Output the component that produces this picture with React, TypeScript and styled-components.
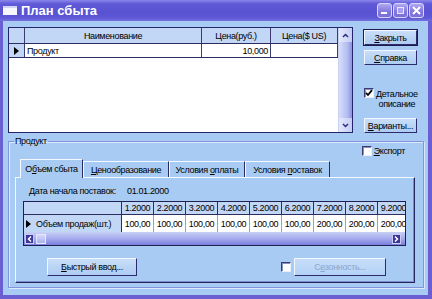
import React from "react";
import styled, { createGlobalStyle } from "styled-components";

const GlobalStyle = createGlobalStyle`
  html, body { margin: 0; padding: 0; }
  body {
    width: 432px; height: 299px; overflow: hidden;
    font-family: "Liberation Sans", Arial, sans-serif;
    font-size: 9px;
    letter-spacing: -0.35px;
    color: #000;
    background: #6a5ed2;
  }
  * { box-sizing: border-box; }
`;

const Window = styled.div`
  width: 432px;
  height: 299px;
  display: flex;
  flex-direction: column;
  background: #6a5ed2;
`;

const TitleBar = styled.div`
  flex: none;
  height: 21px;
  display: flex;
  align-items: center;
  padding: 0 8px 0 3px;
  background: linear-gradient(to bottom, #8c86ec 0%, #605ad8 18%, #5852d2 60%, #5e58d6 85%, #7570e0 100%);
`;

const TitleText = styled.span`
  margin-left: 4px;
  font-family: "Liberation Sans", Arial, sans-serif;
  font-weight: bold;
  font-size: 13px;
  letter-spacing: 0;
  color: #fff;
`;

const TitleButtons = styled.div`
  margin-left: auto;
  display: flex;
  gap: 1px;
  align-items: center;
`;

const TitleBtn = styled.div`
  width: 15px;
  height: 15px;
  border-radius: 3px;
  border: 1px solid #d8d4ff;
  background: linear-gradient(to bottom, #b0a8f0, #8076dc 60%, #7a70d8);
  display: flex;
  align-items: center;
  justify-content: center;
`;

const Frame = styled.div`
  flex: 1;
  display: flex;
  padding: 0 4px 4px 3px;
`;

const Body = styled.div`
  flex: 1;
  background: #a7cbf3;
  display: flex;
  flex-direction: column;
  padding: 6px 4px 7px 5px;
`;

const TopArea = styled.div`
  display: flex;
  gap: 11px;
  height: 106px;
  flex: none;
`;

const GridFrame = styled.div`
  width: 345px;
  height: 106px;
  border: 1px solid #24246a;
  background: #fff;
  display: flex;
`;

const GridMain = styled.div`
  flex: 1;
  display: flex;
  flex-direction: column;
`;

const TopHeader = styled.div`
  display: flex;
  height: 16px;
  background: #c2d6f6;
  border-bottom: 1px solid #2c2c60;
`;

const TopRow = styled.div`
  display: flex;
  height: 14px;
  border-bottom: 1px solid #2c2c60;
`;

const Cell = styled.div<{ $w: number; $align?: string; $head?: boolean }>`
  width: ${(p) => p.$w}px;
  flex: none;
  height: 100%;
  display: flex;
  align-items: center;
  justify-content: ${(p) => p.$align || "flex-start"};
  padding: 0 2px;
  border-right: 1px solid #3c3c70;
  background: ${(p) => (p.$head ? "#c2d6f6" : "#fff")};
  white-space: nowrap;
  overflow: hidden;
`;

const VScroll = styled.div`
  width: 14px;
  display: flex;
  flex-direction: column;
  justify-content: space-between;
  background: linear-gradient(to right, #d8def9, #b2bcf0 65%, #8e92e0);
  border-left: 1px solid #c8d0f4;
`;

const ScrollArrow = styled.div`
  height: 14px;
  display: flex;
  align-items: center;
  justify-content: center;
  background: linear-gradient(to right, #e4e8fc, #c4ccf4);
`;

const SideColumn = styled.div`
  width: 53px;
  display: flex;
  flex-direction: column;
  padding-top: 3px;
`;

const Btn = styled.button<{ $w?: number; $h?: number; $default?: boolean; $mt?: number }>`
  width: ${(p) => (p.$w ? `${p.$w}px` : "100%")};
  height: ${(p) => p.$h || 15}px;
  margin-top: ${(p) => p.$mt || 0}px;
  padding: 0;
  font: inherit;
  letter-spacing: inherit;
  color: #000;
  background: linear-gradient(to bottom, #c8def9, #aecbf2);
  border: 1px solid;
  border-color: #f2f7ff #2c2c6c #2c2c6c #f2f7ff;
  box-shadow: ${(p) => (p.$default ? "0 0 0 1px #1c1c4e" : "none")};
  display: flex;
  align-items: center;
  justify-content: center;
  &:disabled {
    color: #8ea4cc;
    background: linear-gradient(to bottom, #c6ddfa, #b4d2f6);
  }
`;

const Acc = styled.span`
  text-decoration: underline;
`;

const CheckRow = styled.div<{ $mt?: number }>`
  display: flex;
  align-items: flex-start;
  gap: 2px;
  margin-top: ${(p) => p.$mt || 0}px;
`;

const CheckBox = styled.span`
  flex: none;
  width: 10px;
  height: 10px;
  background: #fff;
  border: 1px solid;
  border-color: #3c3c70 #e8f0ff #e8f0ff #3c3c70;
  box-shadow: inset 1px 1px 0 #8890c0;
  display: flex;
  align-items: center;
  justify-content: center;
`;

const CheckLabel = styled.span`
  text-align: center;
  line-height: 10px;
  padding-top: 1px;
`;

const Group = styled.fieldset`
  flex: 1;
  margin: 3px 0 0 0;
  padding: 0 8px 4px 6px;
  border: 1px solid #8494dc;
  box-shadow: inset 1px 1px 0 #dce8ff, 1px 1px 0 #dce8ff;
  display: flex;
  flex-direction: column;
  min-width: 0;
`;

const Legend = styled.legend`
  padding: 0 1px;
  margin-left: -1px;
  line-height: 10px;
`;

const ExportRow = styled.div`
  display: flex;
  justify-content: flex-end;
  align-items: center;
  gap: 2px;
  height: 13px;
  margin-top: -2px;
  padding-right: 10px;
`;

const TabStrip = styled.div`
  display: flex;
  align-items: flex-end;
  height: 18px;
  margin-top: 2px;
  padding-left: 5px;
`;

const Tab = styled.div<{ $w: number; $active?: boolean }>`
  width: ${(p) => p.$w}px;
  height: ${(p) => (p.$active ? 19 : 16)}px;
  margin-bottom: ${(p) => (p.$active ? -1 : 0)}px;
  position: relative;
  z-index: ${(p) => (p.$active ? 1 : 0)};
  display: flex;
  align-items: center;
  justify-content: center;
  background: #a7cbf3;
  border-top: 1px solid #f4f8ff;
  border-left: 1px solid #f4f8ff;
  border-right: 1px solid #2a2a60;
  white-space: nowrap;
`;

const TabPanel = styled.div`
  flex: 1;
  border: 1px solid;
  border-color: #f4f8ff #26265e #26265e #f4f8ff;
  box-shadow: inset -1px -1px 0 #7c8ccc;
  padding: 7px 7px 0 7px;
  display: flex;
  flex-direction: column;
`;

const DateRow = styled.div`
  display: grid;
  grid-template-columns: 98px auto;
  margin-left: 6px;
  height: 12px;
  line-height: 12px;
  white-space: nowrap;
`;

const DataGrid = styled.div`
  margin-top: 4px;
  width: 383px;
  border: 1px solid #202052;
  background: #a7cbf3;
  display: flex;
  flex-direction: column;
  overflow: hidden;
`;

const DataHeader = styled.div`
  display: flex;
  height: 13px;
  background: #c2d6f6;
  border-bottom: 1px solid #2c2c60;
`;

const DataRow = styled.div`
  display: flex;
  height: 17px;
  background: #fff;
`;

const DCell = styled.div<{ $w: number; $head?: boolean }>`
  width: ${(p) => p.$w}px;
  flex: none;
  height: 100%;
  display: flex;
  align-items: center;
  justify-content: center;
  border-right: 1px solid ${(p) => (p.$head ? "#2c2c60" : "#9aa0c0")};
  background: ${(p) => (p.$head ? "#c2d6f6" : "#fff")};
  white-space: nowrap;
`;

const RowHead = styled.div`
  width: 98px;
  flex: none;
  height: 100%;
  display: flex;
  align-items: center;
  gap: 5px;
  padding-left: 2px;
  background: #c2d6f6;
  border-right: 1px solid #2c2c60;
  white-space: nowrap;
`;

const HScroll = styled.div`
  height: 13px;
  display: flex;
  align-items: center;
  gap: 2px;
  padding: 0 4px 0 1px;
  background: linear-gradient(to bottom, #c8d0f6, #9ea4ea 60%, #7a7cdc);
`;

const HArrow = styled.div`
  width: 9px;
  height: 10px;
  background: #3c3698;
  border: 1px solid #c8ccf4;
  display: flex;
  align-items: center;
  justify-content: center;
`;

const HThumb = styled.div`
  width: 10px;
  height: 10px;
  background: linear-gradient(to bottom, #d6d8fa, #aab0ee);
  border: 1px solid #e6e8ff;
`;

const HSpacer = styled.div`
  flex: 1;
`;

const BottomRow = styled.div`
  display: flex;
  align-items: center;
  margin-top: 12px;
  height: 18px;
  padding: 0 21px 0 24px;
`;

const BottomRight = styled.div`
  margin-left: auto;
  display: flex;
  align-items: center;
  gap: 3px;
`;

const Check = () => (
  <svg width="8" height="8" viewBox="0 0 8 8">
    <polyline points="1,3.8 3,6 7,1.2" fill="none" stroke="#000" strokeWidth="1.8" />
  </svg>
);

const RowMarker = () => (
  <svg width="5" height="8" viewBox="0 0 5 8">
    <polygon points="0,0 5,4 0,8" fill="#000" />
  </svg>
);

const months = ["1.2000", "2.2000", "3.2000", "4.2000", "5.2000", "6.2000", "7.2000", "8.2000", "9.2000"];
const values = ["100,00", "100,00", "100,00", "100,00", "100,00", "100,00", "200,00", "200,00", "200,00"];

export default function App() {
  return (
    <>
      <GlobalStyle />
      <Window>
        <TitleBar>
          <svg width="14" height="9" viewBox="0 0 14 9">
            <rect x="0" y="0" width="14" height="9" fill="#f6f6ff" />
            <rect x="0" y="0" width="14" height="2" fill="#d4d4f8" />
          </svg>
          <TitleText>План сбыта</TitleText>
          <TitleButtons>
            <TitleBtn>
              <svg width="11" height="11" viewBox="0 0 11 11">
                <rect x="2" y="7" width="6" height="2" fill="#fff" />
              </svg>
            </TitleBtn>
            <TitleBtn>
              <svg width="11" height="11" viewBox="0 0 11 11">
                <rect x="2.5" y="2.5" width="6" height="6" fill="#a89ff0" stroke="#e8e6ff" strokeWidth="1" />
              </svg>
            </TitleBtn>
            <TitleBtn>
              <svg width="11" height="11" viewBox="0 0 11 11">
                <path d="M2,2 L9,9 M9,2 L2,9" stroke="#fff" strokeWidth="2" />
              </svg>
            </TitleBtn>
          </TitleButtons>
        </TitleBar>
        <Frame>
          <Body>
            <TopArea>
              <GridFrame>
                <GridMain>
                  <TopHeader>
                    <Cell $w={16} $head />
                    <Cell $w={177} $head $align="center">Наименование</Cell>
                    <Cell $w={69} $head $align="center">Цена(руб.)</Cell>
                    <Cell $w={67} $head $align="center">Цена($ US)</Cell>
                  </TopHeader>
                  <TopRow>
                    <Cell $w={16} $head $align="center"><RowMarker /></Cell>
                    <Cell $w={177}>Продукт</Cell>
                    <Cell $w={69} $align="flex-end">10,000</Cell>
                    <Cell $w={67} />
                  </TopRow>
                </GridMain>
                <VScroll>
                  <ScrollArrow>
                    <svg width="7" height="5" viewBox="0 0 7 5">
                      <polyline points="1,4 3.5,1.5 6,4" fill="none" stroke="#2a2a80" strokeWidth="1.5" />
                    </svg>
                  </ScrollArrow>
                  <ScrollArrow>
                    <svg width="7" height="5" viewBox="0 0 7 5">
                      <polyline points="1,1 3.5,3.5 6,1" fill="none" stroke="#2a2a80" strokeWidth="1.5" />
                    </svg>
                  </ScrollArrow>
                </VScroll>
              </GridFrame>
              <SideColumn>
                <Btn $default><span><Acc>З</Acc>акрыть</span></Btn>
                <Btn $mt={5}><span><Acc>С</Acc>правка</span></Btn>
                <CheckRow $mt={23}>
                  <CheckBox><Check /></CheckBox>
                  <CheckLabel><Acc>Д</Acc>етальное<br />описание</CheckLabel>
                </CheckRow>
                <Btn $mt={9}><span><Acc>В</Acc>арианты...</span></Btn>
              </SideColumn>
            </TopArea>
            <Group>
              <Legend>Продукт</Legend>
              <ExportRow>
                <CheckBox />
                <span><Acc>Э</Acc>кспорт</span>
              </ExportRow>
              <TabStrip>
                <Tab $w={63} $active><span>О<Acc>б</Acc>ъем сбыта</span></Tab>
                <Tab $w={86}><span><Acc>Ц</Acc>енообразование</span></Tab>
                <Tab $w={76}><span>Условия <Acc>о</Acc>платы</span></Tab>
                <Tab $w={85}><span>Условия <Acc>п</Acc>оставок</span></Tab>
              </TabStrip>
              <TabPanel>
                <DateRow>
                  <span>Дата начала поставок:</span>
                  <span>01.01.2000</span>
                </DateRow>
                <DataGrid>
                  <DataHeader>
                    <DCell $w={98} $head />
                    {months.map((m) => (
                      <DCell key={m} $w={32} $head>{m}</DCell>
                    ))}
                  </DataHeader>
                  <DataRow>
                    <RowHead>
                      <RowMarker />
                      <span>Объем продаж(шт.)</span>
                    </RowHead>
                    {values.map((v, i) => (
                      <DCell key={i} $w={32}>{v}</DCell>
                    ))}
                  </DataRow>
                  <HScroll>
                    <HArrow>
                      <svg width="5" height="6" viewBox="0 0 5 6">
                        <polyline points="4,0.5 1.5,3 4,5.5" fill="none" stroke="#fff" strokeWidth="1.5" />
                      </svg>
                    </HArrow>
                    <HThumb />
                    <HSpacer />
                    <HArrow>
                      <svg width="5" height="6" viewBox="0 0 5 6">
                        <polyline points="1,0.5 3.5,3 1,5.5" fill="none" stroke="#fff" strokeWidth="1.5" />
                      </svg>
                    </HArrow>
                  </HScroll>
                </DataGrid>
                <BottomRow>
                  <Btn $w={90} $h={18}><span><Acc>Б</Acc>ыстрый ввод...</span></Btn>
                  <BottomRight>
                    <CheckBox />
                    <Btn $w={92} $h={18} disabled><span>С<Acc>е</Acc>зонность...</span></Btn>
                  </BottomRight>
                </BottomRow>
              </TabPanel>
            </Group>
          </Body>
        </Frame>
      </Window>
    </>
  );
}
